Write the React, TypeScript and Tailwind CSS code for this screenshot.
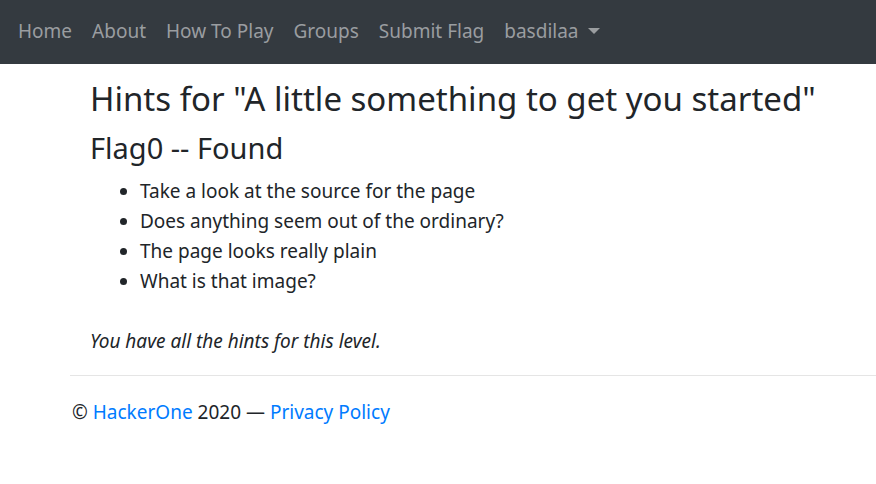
import React from 'react';

const navLinks = ['Home', 'About', 'How To Play', 'Groups', 'Submit Flag'];

const hints = [
  'Take a look at the source for the page',
  'Does anything seem out of the ordinary?',
  'The page looks really plain',
  'What is that image?',
];

export default function App() {
  return (
    <div className="min-h-[484px] bg-white text-[#212529] font-['Noto_Sans',sans-serif]">
      {/* top nav */}
      <nav className="flex h-16 items-center bg-[#343a40] px-2 pb-[2px]">
        <ul className="flex items-center">
          {navLinks.map((l) => (
            <li key={l}>
              <a className="block px-[10px] text-[19px] leading-[30px] text-[#9a9da0]">{l}</a>
            </li>
          ))}
          <li>
            <a className="flex items-center px-[10px] text-[19px] leading-[30px] text-[#9a9da0]">
              basdilaa
              <span className="ml-[9px] inline-block h-0 w-0 border-x-[6px] border-t-[6px] border-x-transparent border-t-[#9a9da0]" />
            </a>
          </li>
        </ul>
      </nav>

      {/* hints */}
      <div className="pl-[90px] pt-[14px]">
        <h1 className="text-[33px] leading-[42px]">Hints for "A little something to get you started"</h1>
        <h2 className="mt-[10px] text-[29px] leading-[36px]">Flag0 -- Found</h2>
        <ul className="mt-[10px] list-disc pl-[50px] text-[19px] leading-[30px]">
          {hints.map((h) => (
            <li key={h}>{h}</li>
          ))}
        </ul>
        <p className="mt-[30px] text-[19px] italic leading-[30px]">You have all the hints for this level.</p>
      </div>

      <hr className="ml-[70px] mt-[19px] border-t border-[#e5e5e5]" />

      <footer className="pl-[72px] pt-[21px] text-[19px] leading-[30px]">
        © <a className="text-[#007bff]">HackerOne</a> 2020 — <a className="text-[#007bff]">Privacy Policy</a>
      </footer>
    </div>
  );
}
